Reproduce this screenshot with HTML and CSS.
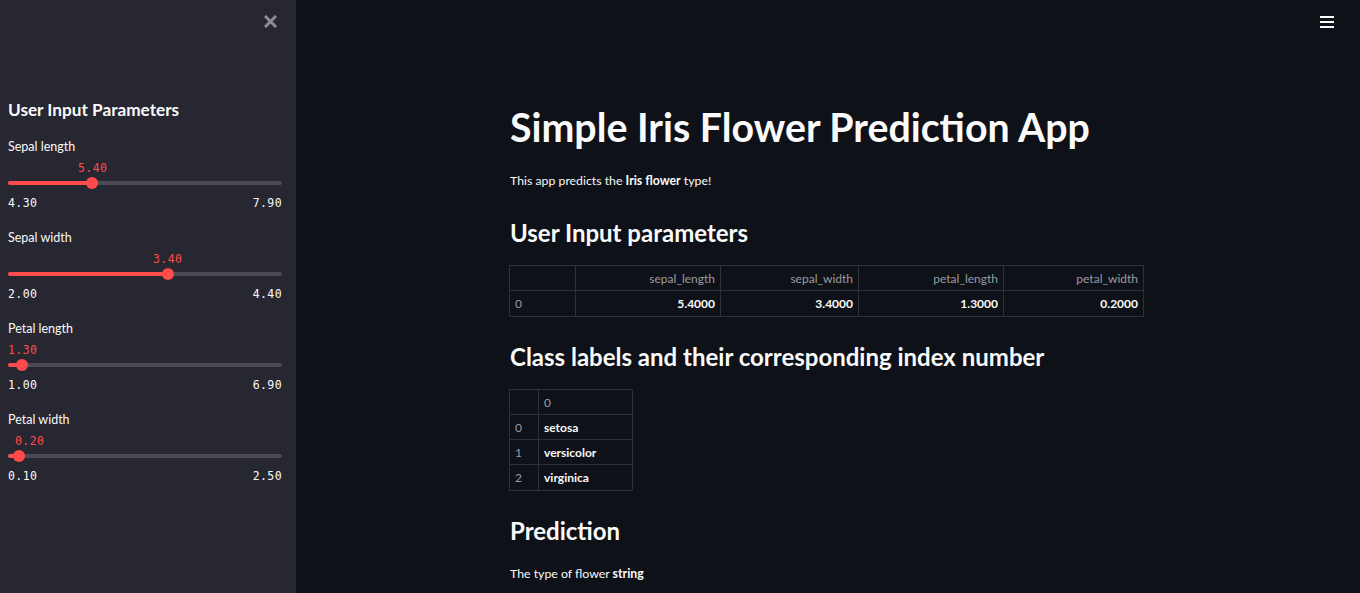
FILE: index.html
```html
<!DOCTYPE html>
<html>
<head>
<meta charset="utf-8">
<link rel="stylesheet" href="styles.css">
</head>
<body>
<aside class="sidebar">
  <div class="sb-top">
    <svg class="close" width="13" height="13" viewBox="0 0 13 13"><path d="M2 2 L11 11 M11 2 L2 11" stroke="#8b8c92" stroke-width="3" stroke-linecap="square"/></svg>
  </div>
  <h3 class="sb-title">User Input Parameters</h3>

  <div class="slider">
    <div class="s-label">Sepal length</div>
    <div class="s-value-row"><span class="s-value" style="left:70px">5.40</span></div>
    <div class="s-track"><div class="s-fill" style="width:84px"></div><div class="s-thumb" style="left:78px"></div></div>
    <div class="s-ticks"><span>4.30</span><span>7.90</span></div>
  </div>

  <div class="slider">
    <div class="s-label">Sepal width</div>
    <div class="s-value-row"><span class="s-value" style="left:145px">3.40</span></div>
    <div class="s-track"><div class="s-fill" style="width:160px"></div><div class="s-thumb" style="left:154px"></div></div>
    <div class="s-ticks"><span>2.00</span><span>4.40</span></div>
  </div>

  <div class="slider">
    <div class="s-label">Petal length</div>
    <div class="s-value-row"><span class="s-value" style="left:0px">1.30</span></div>
    <div class="s-track"><div class="s-fill" style="width:14px"></div><div class="s-thumb" style="left:8px"></div></div>
    <div class="s-ticks"><span>1.00</span><span>6.90</span></div>
  </div>

  <div class="slider">
    <div class="s-label">Petal width</div>
    <div class="s-value-row"><span class="s-value" style="left:7px">0.20</span></div>
    <div class="s-track"><div class="s-fill" style="width:11px"></div><div class="s-thumb" style="left:5px"></div></div>
    <div class="s-ticks"><span>0.10</span><span>2.50</span></div>
  </div>
</aside>

<main class="main">
  <div class="main-top">
    <svg class="menu" width="14" height="12" viewBox="0 0 14 12"><rect x="0" y="0" width="14" height="2" fill="#fafafa"/><rect x="0" y="5" width="14" height="2" fill="#fafafa"/><rect x="0" y="10" width="14" height="2" fill="#fafafa"/></svg>
  </div>
  <div class="block">
    <h1>Simple Iris Flower Prediction App</h1>
    <p class="p1">This app predicts the <b>Iris flower</b> type!</p>

    <h2 class="h-input">User Input parameters</h2>
    <table class="df df1">
      <thead>
        <tr><th class="idx"></th><th>sepal_length</th><th>sepal_width</th><th>petal_length</th><th>petal_width</th></tr>
      </thead>
      <tbody>
        <tr><th class="idx">0</th><td>5.4000</td><td>3.4000</td><td>1.3000</td><td>0.2000</td></tr>
      </tbody>
    </table>

    <h2 class="h-class">Class labels and their corresponding index number</h2>
    <table class="df df2">
      <thead>
        <tr><th class="idx"></th><th>0</th></tr>
      </thead>
      <tbody>
        <tr><th class="idx">0</th><td>setosa</td></tr>
        <tr><th class="idx">1</th><td>versicolor</td></tr>
        <tr><th class="idx">2</th><td>virginica</td></tr>
      </tbody>
    </table>

    <h2 class="h-pred">Prediction</h2>
    <p class="p2">The type of flower <b>string</b></p>
  </div>
</main>
</body>
</html>
```

FILE: styles.css
```css
html, body {
  margin: 0;
  padding: 0;
  height: 593px;
  overflow: hidden;
}
body {
  display: flex;
  background: #0e1117;
  color: #fafafa;
  font-family: Lato, "Liberation Sans", sans-serif;
}
.sidebar {
  width: 296px;
  flex: 0 0 296px;
  background: #262730;
  box-sizing: border-box;
  padding: 0 14px 0 8px;
  height: 593px;
}
.sb-top {
  display: flex;
  justify-content: flex-end;
  padding: 15px 5px 0 0;
  height: 60px;
  box-sizing: border-box;
}
.sb-title {
  margin: 38px 0 0 0;
  font-size: 17.2px;
  font-weight: 700;
  line-height: 24px;
}
.slider {
  margin-top: 15px;
  height: 76px;
}
.s-label {
  font-size: 12.5px;
  line-height: 20px;
}
.s-value-row {
  position: relative;
  height: 24px;
}
.s-value {
  position: absolute;
  top: 4px;
  font-family: "DejaVu Sans Mono", "Liberation Mono", monospace;
  font-size: 11.5px;
  color: #ff4b4b;
  letter-spacing: 0.4px;
}
.s-track {
  position: relative;
  height: 4px;
  border-radius: 2px;
  background: #4a4b54;
}
.s-fill {
  height: 4px;
  border-radius: 2px;
  background: #ff4b4b;
}
.s-thumb {
  position: absolute;
  top: -4px;
  width: 12px;
  height: 12px;
  border-radius: 50%;
  background: #ff4b4b;
}
.s-ticks {
  display: flex;
  justify-content: space-between;
  font-family: "DejaVu Sans Mono", "Liberation Mono", monospace;
  font-size: 11.5px;
  margin-top: 11px;
  letter-spacing: 0.4px;
}
.main {
  flex: 1;
  position: relative;
}
.main-top {
  display: flex;
  justify-content: flex-end;
  padding: 16px 26px 0 0;
  height: 40px;
  box-sizing: border-box;
}
.block {
  width: 636px;
  margin: 0 auto;
}
h1 {
  margin: 64px 0 0 0;
  font-size: 39.3px;
  font-weight: 700;
  line-height: 46px;
}
.p1, .p2 {
  font-size: 12.3px;
  line-height: 20px;
  margin: 21px 0 0 0;
}
b { font-weight: 700; }
h2 {
  font-size: 24px;
  font-weight: 700;
  line-height: 30px;
  margin: 0;
}
.h-input { margin-top: 27px; }
.h-class { margin-top: 25px; }
.h-pred { margin-top: 25px; }
.df {
  border-collapse: collapse;
  font-size: 12px;
  margin-top: 17px;
  margin-left: -1px;
}
.df tr { height: 25px; }
.df tbody tr:last-child { height: 26px; }
.df th, .df td {
  border: 1px solid #2d3038;
  padding: 0 5px;
  box-sizing: border-box;
}
.df thead th {
  font-weight: 400;
  color: #9a9ca3;
}
.df tbody th.idx {
  font-weight: 400;
  color: #9a9ca3;
  text-align: left;
}
.df1 th, .df1 td { text-align: right; }
.df1 td { font-weight: 700; }
.df1 .idx { width: 66px; }
.df1 th:nth-child(2) { width: 145px; }
.df1 th:nth-child(3) { width: 138px; }
.df1 th:nth-child(4) { width: 145px; }
.df1 th:nth-child(5) { width: 140px; }
.df2 th, .df2 td { text-align: left; }
.df2 .idx { width: 29px; }
.df2 th:nth-child(2) { width: 94px; }
.df2 td { font-weight: 700; }
.p2 { margin-top: 18px; }
```
